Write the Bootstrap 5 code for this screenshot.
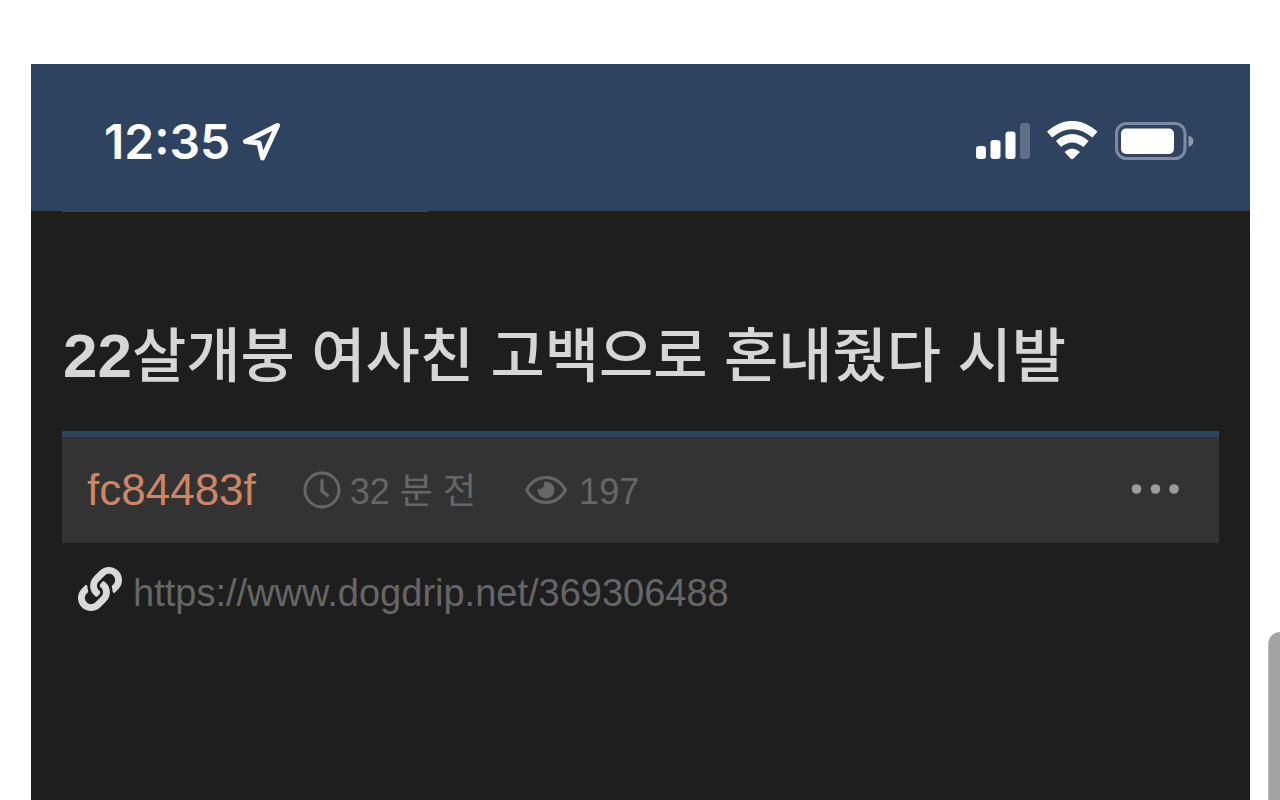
<!DOCTYPE html>
<html lang="ko">
<head>
<meta charset="utf-8">
<meta name="viewport" content="width=device-width, initial-scale=1">
<title>22살개붕 여사친 고백으로 혼내줬다 시발</title>
<link href="https://cdn.jsdelivr.net/npm/bootstrap@5.3.0/dist/css/bootstrap.min.css" rel="stylesheet">
<style>
  body { font-family: "Liberation Sans", "Noto Sans CJK KR", sans-serif; background: #fff; }
  .phone { margin: 64px 18px 0 31px; background: #1e1e1e; min-width: 0; }
  .status-bar { height: 147px; padding: 8px 56px 0 72px; background: #2e435f; color: #fff; border-bottom: 1px solid #33414f; }
  .clock { font: 600 48px/56px Inter, sans-serif; padding: 2px 0 0 1px; }
  .tab-edge { width: 30%; height: 1px; margin-left: 31px; background: #45484a; }
  .post { padding: 0 31px; }
  .post-title { margin: 101px 0 0; padding-left: 1px; font-size: 59px; line-height: 88px; font-weight: 500; color: #d6d6d6; }
  .post-title b { font-size: 62px; font-weight: 700; line-height: 1; }
  .post-meta { margin-top: 30px; height: 112px; padding: 0 36px 0 25px; background: #333; border-top: 6px solid #2e435f; color: #666; font-size: 36px; line-height: 56px; }
  .meta-text { padding-top: 4px; }
  .author { color: #cf8565; font-size: 44px; text-decoration: none; }
  .more { color: #9c9c9c; line-height: 0; }
  .source { padding: 22px 16px; gap: 11px; font-size: 38px; line-height: 56px; }
  .source a { color: #666; text-decoration: none; }
  .source svg { color: #d9d9d9; }
  .gap-author { margin-right: 46px; }
  .gap-views { margin-right: 48px; }
  .views { gap: 11px; }
  .scroll-thumb { width: 12px; margin-top: 632px; background: #a3a3a3; border-left: 1px solid #bdbdbd; border-radius: 12px 0 0 0; }
</style>
</head>
<body>
<div class="d-flex min-vh-100">
  <main class="phone flex-grow-1">
    <header class="status-bar d-flex align-items-center justify-content-between">
      <div class="d-flex align-items-center gap-2">
        <time class="clock">12:35</time>
        <svg width="46" height="44" viewBox="1 0 46 44" fill="none" stroke="currentColor" stroke-width="5" stroke-linejoin="round" aria-hidden="true"><path d="M40.500 6.500 8.500 22.500 22 24 25.500 39Z"/></svg>
      </div>
      <div class="d-flex align-items-center">
        <svg width="218" height="40" viewBox="0 1 218 40" fill="#fff" role="img" aria-label="신호, Wi-Fi, 배터리">
          <rect x="0" y="26" width="10" height="13" rx="3"/>
          <rect x="14.500" y="20" width="10" height="19" rx="3"/>
          <rect x="29.500" y="11.500" width="10" height="27.500" rx="3"/>
          <rect x="44" y="3" width="10" height="36" rx="3" fill="#5f6f86"/>
          <g fill="none" stroke="#fff"><path d="M73.500 14.500Q96-4.500 119 14.500" stroke-width="8"/><path d="M82.500 24Q96 12.500 110 24" stroke-width="8"/></g>
          <path d="M88.500 32Q96 25 104 32L97.500 38.500Q96 40 94.500 38.500Z"/>
          <rect x="140.500" y="3.500" width="68.500" height="35" rx="10" fill="none" stroke="#7c8ba3" stroke-width="3"/>
          <rect x="145" y="8.500" width="53" height="25.500" rx="5"/>
          <path d="M212.500 15.500Q217.500 17 217.500 21T212.500 27Z" fill="#8b98ac"/>
        </svg>
      </div>
    </header>
    <div class="tab-edge"></div>
    <article class="post">
      <h1 class="post-title"><b>22</b>살개붕 여사친 고백으로 혼내줬다 시발</h1>
      <div class="post-meta d-flex align-items-center">
        <a href="#" class="author gap-author">fc84483f</a>
        <span class="d-flex align-items-center gap-2 gap-views">
          <svg width="40" height="40" viewBox="0 0 40 40" fill="none" stroke="currentColor" stroke-linecap="round" aria-hidden="true"><circle cx="20" cy="20" r="17" stroke-width="3"/><path d="M20 10.500v10.500l5.500 4.500" stroke-width="3.400"/></svg>
          <span class="meta-text">32 분 전</span>
        </span>
        <span class="views d-flex align-items-center">
          <svg width="44" height="40" viewBox="0 0 44 40" aria-hidden="true"><path d="M2.500 20C7 12 14 7.500 22 7.500S37 12 41.500 20C37 28 30 32.500 22 32.500S7 28 2.500 20Z" fill="none" stroke="currentColor" stroke-width="3" stroke-linejoin="round"/><path d="M22 11.500a8.500 8.500 0 1 1-8.400 7.400q3 .7 5-1.100t1.200-5.800Z" fill="currentColor"/></svg>
          <span class="meta-text">197</span>
        </span>
        <button type="button" class="btn p-0 border-0 ms-auto more" aria-label="더 보기">
          <svg width="56" height="20" viewBox="0 0 56 20" fill="currentColor"><circle cx="9.500" cy="9" r="4.800"/><circle cx="28.500" cy="9" r="4.800"/><circle cx="47" cy="9" r="4.800"/></svg>
        </button>
      </div>
      <div class="source d-flex align-items-center">
        <svg class="mb-2" width="44" height="44" viewBox="0 0 512 512" fill="currentColor" aria-hidden="true"><path d="M326.612 185.391c59.747 59.809 58.927 155.698.36 214.590-.11.12-.24.25-.36.37l-67.200 67.200c-59.270 59.270-155.699 59.262-214.960 0-59.270-59.260-59.270-155.700 0-214.960l37.106-37.106c9.840-9.840 26.786-3.300 27.294 10.606.648 17.722 3.826 35.527 9.690 52.721 1.986 5.822.567 12.262-3.783 16.612l-13.087 13.087c-28.026 28.026-28.905 73.660-1.155 101.960 28.024 28.579 74.086 28.749 102.325.51l67.200-67.190c28.191-28.191 28.073-73.757 0-101.830-3.701-3.694-7.429-6.564-10.341-8.569a16.037 16.037 0 0 1-6.947-12.606c-.396-10.567 3.348-21.456 11.698-29.806l21.054-21.055c5.521-5.521 14.182-6.199 20.584-1.731a152.482 152.482 0 0 1 20.522 17.197zM467.547 44.449c-59.261-59.262-155.690-59.270-214.960 0l-67.200 67.200c-.12.12-.25.25-.36.37-58.566 58.892-59.387 154.781.36 214.590a152.454 152.454 0 0 0 20.521 17.196c6.402 4.468 15.064 3.789 20.584-1.731l21.054-21.055c8.350-8.350 12.094-19.239 11.698-29.806a16.037 16.037 0 0 0-6.947-12.606c-2.912-2.005-6.640-4.875-10.341-8.569-28.073-28.073-28.191-73.639 0-101.830l67.200-67.190c28.239-28.239 74.300-28.069 102.325.51 27.750 28.300 26.872 73.934-1.155 101.960l-13.087 13.087c-4.350 4.350-5.769 10.790-3.783 16.612 5.864 17.194 9.042 34.999 9.690 52.721.509 13.906 17.454 20.446 27.294 10.606l37.106-37.106c59.271-59.259 59.271-155.699.001-214.959z"/></svg>
        <a href="https://www.dogdrip.net/369306488">https://www.dogdrip.net/369306488</a>
      </div>
    </article>
  </main>
  <div class="scroll-thumb" aria-hidden="true"></div>
</div>
<script src="https://cdn.jsdelivr.net/npm/bootstrap@5.3.0/dist/js/bootstrap.bundle.min.js"></script>
</body>
</html>
